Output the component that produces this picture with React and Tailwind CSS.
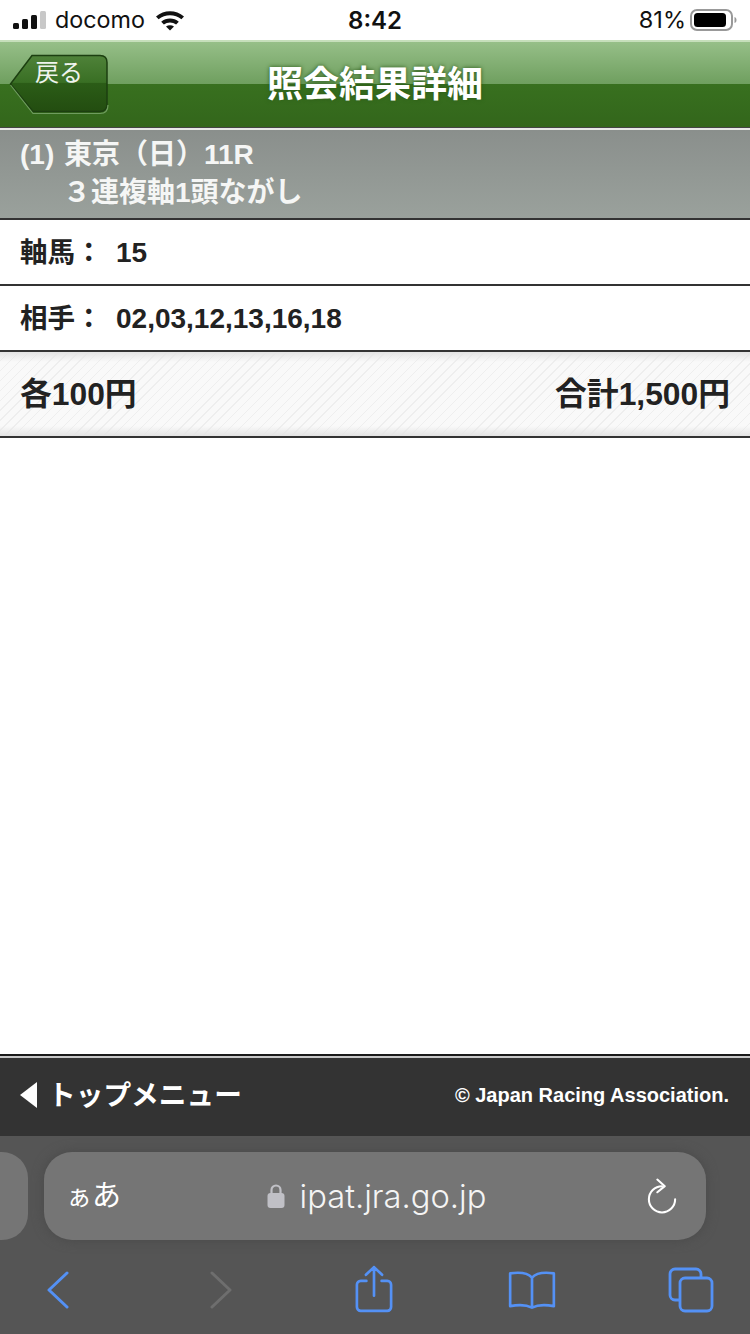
const jp = 'font-["Liberation_Sans","Noto_Sans_CJK_JP",sans-serif]';

const StatusBar = () => (
  <div className="h-10 bg-white flex items-center justify-between text-[#111] shrink-0 font-['Inter','Liberation_Sans',sans-serif]">
    <div className="flex items-center w-[300px] pl-[13px]">
      <svg width="33" height="20" viewBox="0 0 33 20">
        <rect x="0" y="13" width="6" height="6" rx="1.5" fill="#111" />
        <rect x="9" y="9" width="6" height="10" rx="1.5" fill="#111" />
        <rect x="18" y="5" width="6" height="14" rx="1.5" fill="#111" />
        <rect x="27" y="1" width="6" height="18" rx="1.5" fill="#c8c8c8" />
      </svg>
      <span className="ml-[9px] text-[23.300px] leading-none font-normal">docomo</span>
      <svg className="ml-[10px]" width="30" height="22" viewBox="0 0 30 22">
        <path d="M1 7.500C9 .5 21 .5 29 7.500l-2.600 2.800C20 4.800 10 4.800 3.600 10.300z" fill="#111" />
        <path d="M6.200 12.800c5-4.300 12.600-4.300 17.600 0l-2.700 2.800c-3.500-2.800-8.700-2.800-12.200 0z" fill="#111" />
        <path d="M11 17.500c2.400-1.800 5.600-1.800 8 0L15 21.500z" fill="#111" />
      </svg>
    </div>
    <span className="text-[24px] font-semibold leading-none pt-[1px]">8:42</span>
    <div className="flex items-center justify-end w-[300px] pr-[13px]">
      <span className="text-[23.500px] leading-none">81%</span>
      <svg className="ml-1" width="47" height="24" viewBox="0 0 47 24">
        <rect x="1" y="2" width="41" height="20" rx="6" fill="none" stroke="#999" strokeWidth="2" />
        <rect x="4" y="5" width="32" height="14" rx="3.500" fill="#000" />
        <path d="M44.500 9c1.500.5 2 1.500 2 3s-.5 2.500-2 3z" fill="#999" />
      </svg>
    </div>
  </div>
);

const BackButton = () => (
  <div className="relative w-[100px] h-[62px] ml-[9px]">
    <svg className="absolute inset-0" width="100" height="62" viewBox="0 0 100 62">
      <defs>
        <linearGradient id="backFill" x1="0" y1="0" x2="0" y2="1">
          <stop offset="0" stopColor="#4f8239" />
          <stop offset="0.48" stopColor="#396f24" />
          <stop offset="0.5" stopColor="#2b5c17" />
          <stop offset="1" stopColor="#234d10" />
        </linearGradient>
      </defs>
      <path d="M1.500 30 L23 1.500 H91 Q98 1.500 98 8.500 V50 Q98 57.500 91 57.500 H24 Z" fill="url(#backFill)" stroke="#1c3f10" strokeWidth="1.500" />
      <path d="M1.500 31 L24 59.500 H91 Q99 59.500 99 51" fill="none" stroke="#6f9c5e" strokeWidth="1.200" />
    </svg>
    <span className={`absolute left-[26px] top-[5px] text-[24px] leading-[28px] text-[#f0f4ee] ${jp}`}>戻る</span>
  </div>
);

const Header = () => (
  <header className="h-[88px] shrink-0 border-t-2 border-b-[1px] border-t-[#c6dfbb] border-b-[#444] grid grid-cols-[1fr_auto_1fr] items-center bg-[linear-gradient(#96bf88_0px,#6f9f5f_42px,#38701f_42px,#33661b_100%)]">
    <BackButton />
    <h1 className={`text-[36px] leading-none font-bold text-white [text-shadow:0_0_4px_#2b5a18] ${jp}`}>照会結果詳細</h1>
    <div />
  </header>
);

const BetInfo = () => (
  <section className={`h-[92px] shrink-0 border-t-2 border-t-[#e8e8e8] border-b-2 border-b-[#333] pl-5 pt-[6px] text-[28px] leading-[38px] font-bold text-[#f5f6f5] bg-[linear-gradient(#8a8f8c,#9aa19c)] ${jp}`}>
    <div><span className="mr-[2px]">(1)</span> 東京（日）11R</div>
    <div className="pl-[43px]">３連複軸1頭ながし</div>
  </section>
);

const Row = ({ label, value }) => (
  <div className={`h-[66px] shrink-0 border-b-2 border-b-[#333] flex items-center pl-5 pt-[2px] text-[#222] font-bold ${jp}`}>
    <span className="w-[96px] text-[27.500px]">{label}</span>
    <span className="text-[28px]">{value}</span>
  </div>
);

const Total = () => (
  <div className={`h-[86px] shrink-0 border-b-2 border-b-[#333] flex items-center justify-between px-5 pt-[2px] text-[31.800px] font-bold text-[#222] bg-[linear-gradient(#e4e4e4_0px,#f6f6f600_10px,#f6f6f600_74px,#e4e4e4_84px),repeating-linear-gradient(135deg,#f9f9f9_0px,#f9f9f9_6px,#eeeeee_6px,#eeeeee_7px)] ${jp}`}>
    <span>各100円</span>
    <span>合計1,500円</span>
  </div>
);

const Footer = () => (
  <footer className="h-[82px] shrink-0 border-t-2 border-t-[#1a1a1a] bg-[#333] flex flex-col">
    <div className="h-[2px] bg-[#c8c8c8]" />
    <div className={`flex-1 flex items-center justify-between pl-5 pr-[21px] pb-[3px] font-bold text-white ${jp}`}>
      <div className="flex items-center">
        <svg width="17" height="26" viewBox="0 0 17 26"><path d="M17 0V26L0 13z" fill="#fff" /></svg>
        <span className="ml-[11px] pt-[1px] text-[27.700px] leading-none">トップメニュー</span>
      </div>
      <span className="pb-[2px] text-[20px] leading-none">© Japan Racing Association.</span>
    </div>
  </footer>
);

const Toolbar = () => (
  <div className="h-[198px] shrink-0 bg-[#555] flex flex-col">
    <div className="h-[88px] mt-4 flex gap-4">
      <div className="w-[28px] rounded-r-[26px] bg-[#757575]" />
      <div className="w-[662px] rounded-[28px] bg-[#757575] flex items-center justify-between pl-[22px] pr-[29px] text-white shadow-[0_0_12px_#4a4a4a]">
        <span className={`w-[58px] text-[29px] leading-none flex items-baseline ${jp}`}><span className="text-[26px]">ぁ</span><span>あ</span></span>
        <div className="flex items-center gap-[15px] text-[#f4f4f4] -ml-[18px]">
          <svg width="18" height="26" viewBox="0 0 18 26">
            <path d="M4.500 11V7a4.500 4.500 0 0 1 9 0v4" fill="none" stroke="#c0c0c6" strokeWidth="2.200" />
            <rect x="0.500" y="10" width="17" height="15" rx="3" fill="#c0c0c6" />
          </svg>
          <span className="text-[32.700px] leading-none font-['Inter','Liberation_Sans',sans-serif] font-light">ipat.jra.go.jp</span>
        </div>
        <svg width="30" height="36" viewBox="0 0 32 38" fill="none" stroke="#fff" strokeWidth="2.200" strokeLinecap="round" strokeLinejoin="round">
          <path d="M16 8.500A14 14 0 1 0 30 22.500" />
          <path d="M11 1.500l8 7-8 6.500" />
        </svg>
      </div>
    </div>
    <div className="flex-1 flex items-center pl-[46px] pt-[6px]">
      <svg width="24" height="38" viewBox="0 0 24 38" fill="none" stroke="#5491f5" strokeWidth="3" strokeLinecap="round" strokeLinejoin="round">
        <path d="M21 2 3 19l18 17" />
      </svg>
      <svg className="ml-[139px]" width="24" height="38" viewBox="0 0 24 38" fill="none" stroke="#6e6e6e" strokeWidth="3" strokeLinecap="round" strokeLinejoin="round">
        <path d="M3 2l18 17L3 36" />
      </svg>
      <svg className="ml-[122px] -mt-[3px]" width="38" height="48" viewBox="0 0 40 50" fill="none" stroke="#5491f5" strokeWidth="2.800" strokeLinecap="round" strokeLinejoin="round">
        <path d="M12 16.500H6a4 4 0 0 0-4 4V44a4 4 0 0 0 4 4h28a4 4 0 0 0 4-4V20.500a4 4 0 0 0-4-4h-6" />
        <path d="M20 32V2M11.500 10 20 2l8.500 8" />
      </svg>
      <svg className="ml-[115px]" width="48" height="38" viewBox="0 0 50 40" fill="none" stroke="#5491f5" strokeWidth="2.800" strokeLinecap="round" strokeLinejoin="round">
        <path d="M25 7C21 2.500 12 1 2 2.500V37c8-1.500 17-1.500 23 1.500 6-3 15-3 23-1.500V2.500C38 1 29 2.500 25 7zM25 7v31" />
      </svg>
      <svg className="ml-[112px]" width="46" height="46" viewBox="0 0 46 46" fill="none" stroke="#5491f5" strokeWidth="2.800" strokeLinejoin="round">
        <path d="M33 11V7a5 5 0 0 0-5-5H7a5 5 0 0 0-5 5v21a5 5 0 0 0 5 5h4" />
        <rect x="12" y="11" width="32" height="33" rx="5" />
      </svg>
    </div>
  </div>
);

export default function App() {
  return (
    <div className="w-[750px] h-[1334px] bg-white flex flex-col overflow-hidden">
      <StatusBar />
      <Header />
      <BetInfo />
      <Row label="軸馬：" value="15" />
      <Row label="相手：" value="02,03,12,13,16,18" />
      <Total />
      <div className="flex-1 bg-white" />
      <Footer />
      <Toolbar />
    </div>
  );
}
